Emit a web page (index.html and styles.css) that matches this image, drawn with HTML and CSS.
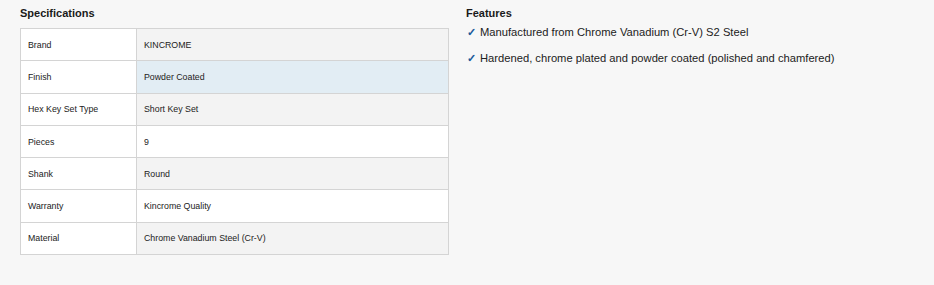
FILE: index.html
```html
<!DOCTYPE html>
<html>
<head>
<meta charset="utf-8">
<link rel="stylesheet" href="styles.css">
</head>
<body>
<div class="page">
  <section class="specs">
    <h2 class="title">Specifications</h2>
    <table class="spec-table">
      <tr><td class="k">Brand</td><td class="v">KINCROME</td></tr>
      <tr class="hl"><td class="k">Finish</td><td class="v">Powder Coated</td></tr>
      <tr><td class="k">Hex Key Set Type</td><td class="v">Short Key Set</td></tr>
      <tr class="even"><td class="k">Pieces</td><td class="v">9</td></tr>
      <tr><td class="k">Shank</td><td class="v">Round</td></tr>
      <tr class="even"><td class="k">Warranty</td><td class="v">Kincrome Quality</td></tr>
      <tr><td class="k">Material</td><td class="v">Chrome Vanadium Steel (Cr-V)</td></tr>
    </table>
  </section>
  <section class="features">
    <h2 class="title ftitle">Features</h2>
    <ul class="flist">
      <li><span class="tick">✓</span>Manufactured from Chrome Vanadium (Cr-V) S2 Steel</li>
      <li><span class="tick">✓</span>Hardened, chrome plated and powder coated (polished and chamfered)</li>
    </ul>
  </section>
</div>
</body>
</html>
```

FILE: styles.css
```css
html, body {
  margin: 0;
  padding: 0;
  background: #f7f7f7;
}
body {
  font-family: "Liberation Sans", Arial, sans-serif;
  color: #222;
  width: 934px;
  height: 285px;
  overflow: hidden;
}
.page {
  display: flex;
  padding: 5px 0 0 20px;
}
.specs {
  width: 429px;
}
.title {
  margin: 0;
  font-size: 11px;
  font-weight: bold;
  color: #1a1a1a;
  line-height: 16px;
}
.spec-table {
  margin-top: 7px;
  width: 429px;
  border-collapse: collapse;
  font-size: 8.8px;
}
.spec-table td {
  border: 1px solid #d4d4d4;
  height: 32.3px;
  padding: 0 7px;
  box-sizing: border-box;
}
.spec-table .k {
  width: 116px;
  background: #fff;
}
.spec-table .v {
  background: #f3f3f3;
}
.spec-table .even .v {
  background: #fff;
}
.spec-table .hl .v {
  background: #e2edf4;
}
.features {
  margin-left: 17px;
}
.flist {
  list-style: none;
  margin: 1px 0 0;
  padding: 0;
  font-size: 11.2px;
  color: #222;
}
.flist li {
  line-height: 20px;
  margin-bottom: 6px;
  display: flex;
}
.tick {
  color: #1d5a99;
  font-weight: bold;
  width: 13px;
  margin-left: 1px;
}
```
